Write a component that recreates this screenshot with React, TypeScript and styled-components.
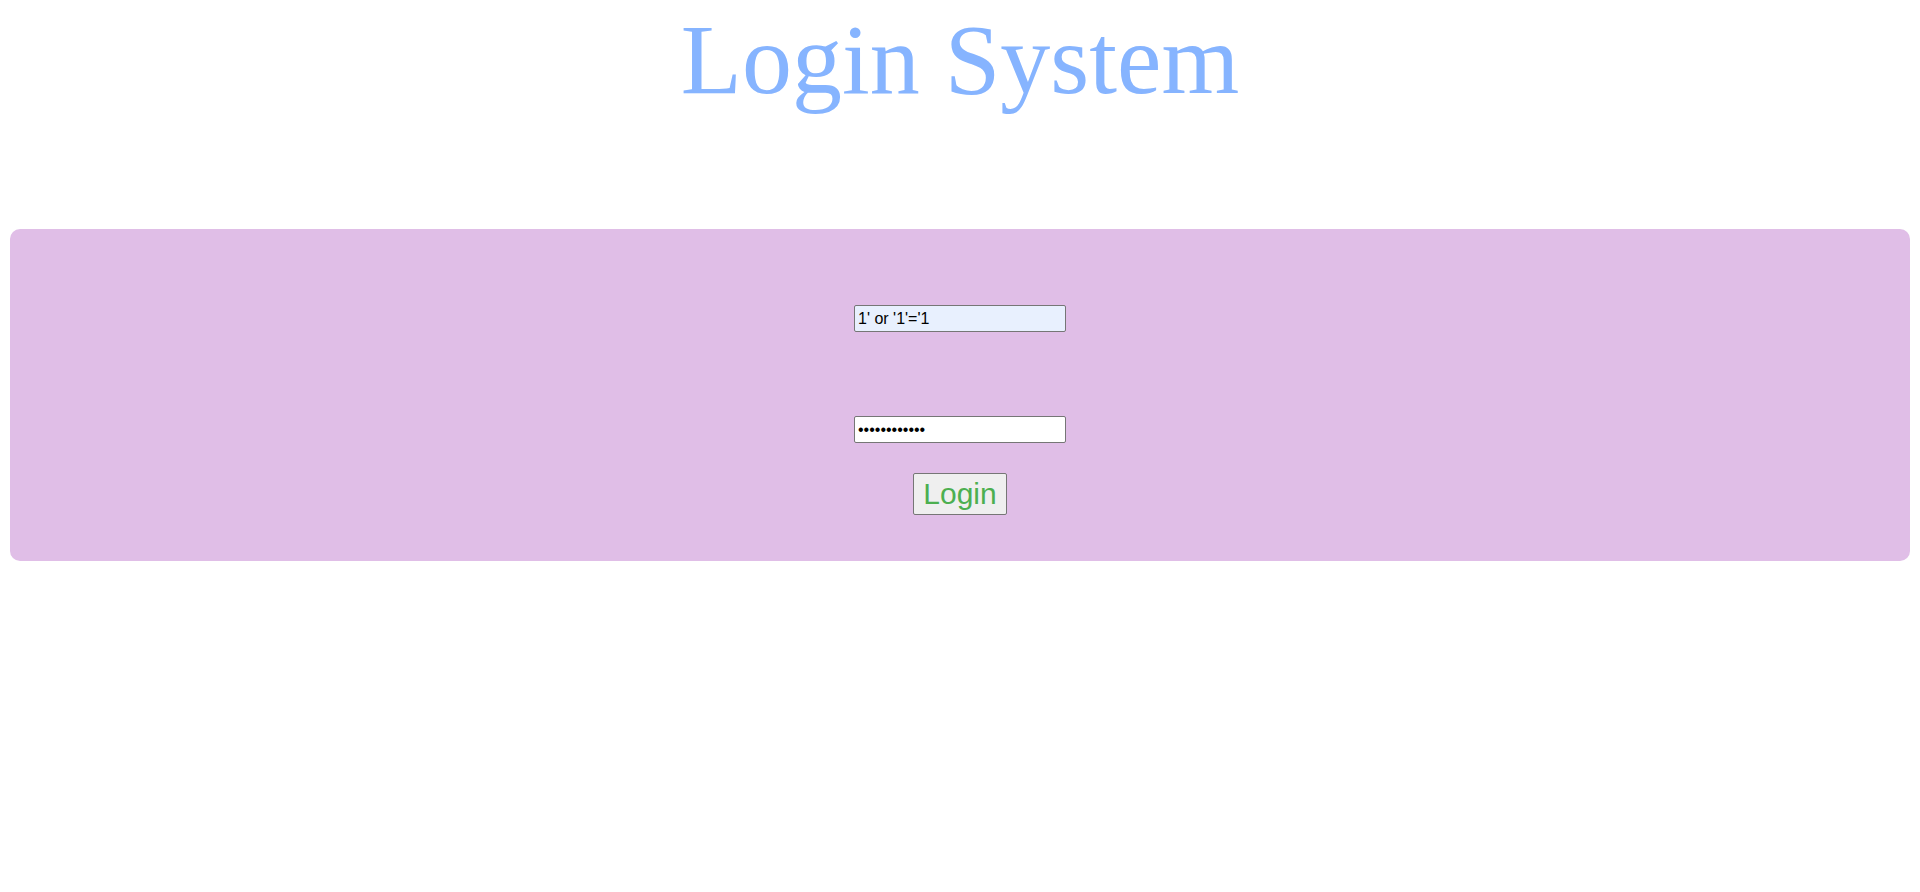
import React from "react";
import styled, { createGlobalStyle } from "styled-components";

const Global = createGlobalStyle`
  html, body { margin: 0; padding: 0; background: #ffffff; }
  body { font-family: "Liberation Serif", "Times New Roman", serif; }
`;

const Page = styled.div`
  padding: 4px 10px 0;
`;

const Title = styled.h1`
  margin: 0;
  text-align: center;
  font-family: "Liberation Serif", "Times New Roman", serif;
  font-weight: normal;
  font-size: 100px;
  line-height: 111px;
  color: #86b4ff;
`;

const Panel = styled.form`
  margin-top: 114px;
  background: #e0bee7;
  border-radius: 10px;
  height: 332px;
  box-sizing: border-box;
  padding-top: 76px;
  display: flex;
  flex-direction: column;
  align-items: center;
`;

const Field = styled.input<{ $filled?: boolean }>`
  box-sizing: border-box;
  width: 212px;
  height: 27px;
  margin: 0;
  padding: 0 3px;
  border: 1px solid #767676;
  border-radius: 2px;
  background: ${(p) => (p.$filled ? "#e8f0fe" : "#ffffff")};
  font-family: "Liberation Sans", Arial, sans-serif;
  font-size: 16px;
  color: #000;
  outline: none;
`;

const Spacer = styled.div<{ $h: number }>`
  height: ${(p) => p.$h}px;
`;

const Button = styled.button`
  box-sizing: border-box;
  width: 94px;
  height: 42px;
  margin: 0;
  padding: 0;
  border: 1px solid #767676;
  border-radius: 2px;
  background: #efefef;
  color: #4caf50;
  font-family: "Liberation Sans", Arial, sans-serif;
  font-size: 30px;
  line-height: 40px;
  cursor: pointer;
`;

export default function App() {
  return (
    <Page>
      <Global />
      <Title>Login System</Title>
      <Panel onSubmit={(e) => e.preventDefault()}>
        <Field type="text" $filled defaultValue="1' or '1'='1" />
        <Spacer $h={84} />
        <Field type="password" defaultValue="abcdefghijkl" />
        <Spacer $h={30} />
        <Button type="submit">Login</Button>
      </Panel>
    </Page>
  );
}
